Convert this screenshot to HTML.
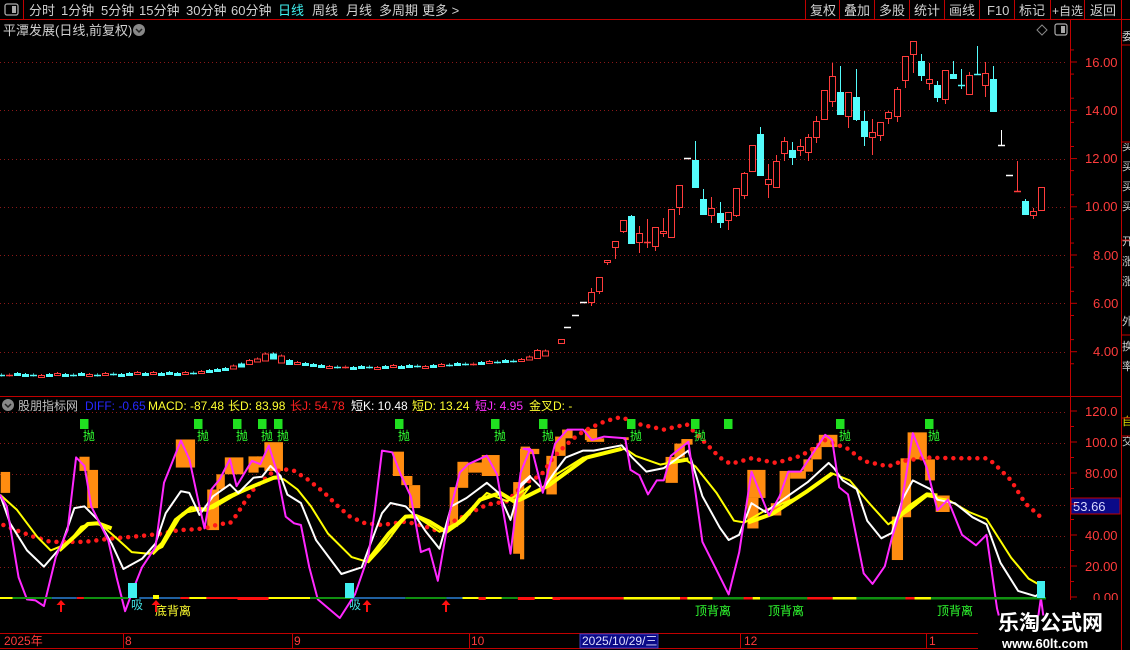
<!DOCTYPE html>
<html><head><meta charset="utf-8">
<style>
html,body{margin:0;padding:0;background:#000;width:1130px;height:650px;overflow:hidden}
svg{display:block}
text{font-family:"Liberation Sans","Noto Sans CJK SC",sans-serif}
</style></head><body>
<svg id="s" width="1130" height="650" xmlns="http://www.w3.org/2000/svg">
<rect width="1130" height="650" fill="#000"/>
<g stroke="#c00000" stroke-width="1" fill="none">
<line x1="0" y1="19.5" x2="1130" y2="19.5"/>
<line x1="23.5" y1="0" x2="23.5" y2="19"/>
<line x1="805.5" y1="0" x2="805.5" y2="19"/><line x1="839.5" y1="0" x2="839.5" y2="19"/>
<line x1="874.5" y1="0" x2="874.5" y2="19"/><line x1="909.5" y1="0" x2="909.5" y2="19"/>
<line x1="944.5" y1="0" x2="944.5" y2="19"/><line x1="979.5" y1="0" x2="979.5" y2="19"/>
<line x1="1014.5" y1="0" x2="1014.5" y2="19"/><line x1="1050.5" y1="0" x2="1050.5" y2="19"/>
<line x1="1084.5" y1="0" x2="1084.5" y2="19"/><line x1="1121.5" y1="0" x2="1121.5" y2="650"/>
<line x1="1070.5" y1="19" x2="1070.5" y2="633"/>
<line x1="0" y1="396.5" x2="1121" y2="396.5"/>
<line x1="0" y1="633.5" x2="978" y2="633.5"/>
<line x1="0" y1="648.5" x2="978" y2="648.5"/>
</g>
<rect x="5" y="4" width="13" height="11" rx="2" fill="none" stroke="#aaa" stroke-width="1.3"/>
<rect x="12" y="6" width="4" height="7" fill="#aaa"/>
<g font-size="13" fill="#d0d0d0">
<text x="29" y="15">分时</text><text x="61" y="15">1分钟</text><text x="101" y="15">5分钟</text>
<text x="139" y="15">15分钟</text><text x="186" y="15">30分钟</text><text x="231" y="15">60分钟</text>
<text x="278" y="15" fill="#40f0f0">日线</text><text x="312" y="15">周线</text><text x="346" y="15">月线</text>
<text x="379" y="15">多周期</text><text x="422" y="15">更多 &gt;</text>
<text x="810" y="15">复权</text><text x="844" y="15">叠加</text><text x="879" y="15">多股</text>
<text x="914" y="15">统计</text><text x="949" y="15">画线</text><text x="987" y="15">F10</text>
<text x="1019" y="15">标记</text><text x="1052" y="15" font-size="12">+自选</text><text x="1090" y="15">返回</text>
<text x="3" y="35">平潭发展(日线,前复权)</text>
</g>
<circle cx="139" cy="30" r="6" fill="#888"/><path d="M136 29 L139 32 L142 29" stroke="#222" stroke-width="1.5" fill="none"/>
<path d="M1042 25 L1047 30 L1042 35 L1037 30 Z" fill="none" stroke="#888"/>
<rect x="1055" y="24" width="12" height="11" rx="2" fill="none" stroke="#aaa" stroke-width="1.2"/><rect x="1061" y="26" width="4" height="7" fill="#aaa"/>
<g font-size="13" fill="#ff3c3c">
<text x="1085" y="67">16.00</text><text x="1085" y="115">14.00</text><text x="1085" y="163">12.00</text>
<text x="1085" y="211">10.00</text><text x="1093" y="260">8.00</text><text x="1093" y="308">6.00</text><text x="1093" y="356">4.00</text>
<text x="1085" y="416">120.0</text><text x="1085" y="447">100.0</text><text x="1085" y="478">80.00</text>
<text x="1085" y="540">40.00</text><text x="1085" y="571">20.00</text><text x="1093" y="602">0.00</text>
</g>
<rect x="1071" y="498" width="49" height="16" fill="#0a0a88" stroke="#c00000"/>
<text x="1073" y="511" font-size="13" fill="#d8d8ff">53.66</text>
<g fill="#ccc" font-size="11"><text x="1122" y="40">委</text><text x="1122" y="150">买</text><text x="1122" y="170">买</text><text x="1122" y="190">买</text><text x="1122" y="210">买</text><text x="1122" y="245">开</text><text x="1122" y="265">涨</text><text x="1122" y="285">涨</text><text x="1122" y="325">外</text><text x="1122" y="350">换</text><text x="1122" y="370">率</text>
<text x="1122" y="425" fill="#e0e000">自</text><text x="1122" y="445">交</text></g>
<g stroke="#c00000"><line x1="1121" y1="45" x2="1130" y2="45"/><line x1="1121" y1="142" x2="1130" y2="142"/><line x1="1121" y1="240" x2="1130" y2="240"/><line x1="1121" y1="335" x2="1130" y2="335"/><line x1="1121" y1="418" x2="1130" y2="418"/><line x1="1121" y1="436" x2="1130" y2="436"/></g>
<circle cx="8" cy="405" r="6" fill="#888"/><path d="M5 404 L8 407 L11 404" stroke="#222" stroke-width="1.5" fill="none"/>
<g font-size="12">
<text x="18" y="410" fill="#c0c0c0">股朋指标网</text>
<text x="85" y="410" fill="#2828ff">DIFF: -0.65</text>
<text x="148" y="410" fill="#ffff30">MACD: -87.48</text>
<text x="228" y="410" fill="#ffff30">长D: 83.98</text>
<text x="290" y="410" fill="#ff2020">长J: 54.78</text>
<text x="351" y="410" fill="#ffffff">短K: 10.48</text>
<text x="412" y="410" fill="#ffff30">短D: 13.24</text>
<text x="475" y="410" fill="#ff30ff">短J: 4.95</text>
<text x="529" y="410" fill="#ffff30">金叉D: -</text>
</g>
<g font-size="12" fill="#ff3c3c">
<text x="4" y="645">2025年</text><text x="125" y="645">8</text><text x="294" y="645">9</text><text x="471" y="645">10</text>
<text x="744" y="645">12</text><text x="929" y="645">1</text></g>
<rect x="580" y="634" width="78" height="14" fill="#0a0a88" stroke="#4040c0"/>
<text x="582" y="645" font-size="12" fill="#e0e0ff">2025/10/29/三</text>
<g stroke="#c00000"><line x1="123.5" y1="633" x2="123.5" y2="648"/><line x1="292.5" y1="633" x2="292.5" y2="648"/><line x1="469.5" y1="633" x2="469.5" y2="648"/><line x1="740.5" y1="633" x2="740.5" y2="648"/><line x1="926.5" y1="633" x2="926.5" y2="648"/></g>
<g font-size="12"><text x="155" y="615" fill="#ffff30">底背离</text>
<text x="695" y="615" fill="#30ff30">顶背离</text><text x="768" y="615" fill="#30ff30">顶背离</text><text x="937" y="615" fill="#30ff30">顶背离</text>
<text x="131" y="609" fill="#40e0e0">吸</text><text x="349" y="609" fill="#40e0e0">吸</text></g>
<rect x="980" y="600" width="141" height="50" fill="#000"/>
<text x="998" y="630" font-size="21" font-weight="bold" fill="#fff" font-family="'Liberation Serif','Noto Serif CJK SC',serif">乐淘公式网</text>
<text x="1002" y="648" font-size="13" font-weight="bold" fill="#fff" font-family="'Liberation Serif',serif">www.60lt.com</text>
<g id="g"></g>
</svg>
<script>
var NS="http://www.w3.org/2000/svg",G=document.getElementById('g');
function el(t,a){var e=document.createElementNS(NS,t);for(var k in a)e.setAttribute(k,a[k]);G.appendChild(e);return e;}
[62,110.3,158.6,206.8,255,303.3,351.7,411.7,442.7,473.7,504.7,535.7,566.7].forEach(function(y){
 el('line',{x1:0,y1:Math.round(y)+.5,x2:1068,y2:Math.round(y)+.5,stroke:'#8a1818','stroke-dasharray':'1 3'});});
for(var p=3.5;p<=16.5;p+=1){var y=62+(16-p)*24.14;if(y>25&&y<394)el('line',{x1:1071,y1:y,x2:1074,y2:y,stroke:'#c00000'});}
[62,110.3,158.6,206.8,255,303.3,351.7].forEach(function(y){el('line',{x1:1071,y1:y,x2:1077,y2:y,stroke:'#c00000'});});
for(var v=0;v<=120;v+=10){var y=597-v*1.55;el('line',{x1:1071,y1:y,x2:v%20?1074:1077,y2:y,stroke:'#c00000'});}
var RED='#ff3c3c',CY='#54fcfc';
var C=[];
var flat=[375,375,374,375,375,376,375,374,375,375,374,375,375,374,374,375,374,373,374,373,374,373,374,373,373,372,371,370,369,367,365,362,360,357,356,359,362,363,364,365,366,367,367,367,368,367,367,368,367,366,367,366,366,367,366,365,365,364,364,364,363,362,362,361,361,360,358,354,353];
for(var i=0;i<flat.length;i++){var x=1+i*8,y=flat[i],pr=i?flat[i-1]:y;var t=(i%3==0)?'c':(i%2?'r':'c');
 if(i>=32&&i<34)t='r';if(i==34)t='c';if(i>=66)t='r';
 var h=Math.max(1,Math.abs(y-pr)+((i>32&&i<36)||i>66?4:1));C.push([x,y-h/2,y+h/2,y-h/2-1,y+h/2+1,t]);}
C=C.concat([[561,339,343,339,343,'r'],[567,327,327,327,327,'w'],[575,315,315,315,315,'w'],[583,302,302,302,302,'w'],[591,292,302,288,306,'r'],[599,277,291,277,294,'r'],[607,260,262,260,265,'r'],[615,241,247,241,259,'r'],[623,220,231,220,233,'r'],[631,216,243,215,243,'c'],[639,233,242,226,253,'r'],[647,242,243,219,248,'r'],[655,227,246,227,251,'r'],[663,231,233,218,237,'r'],[671,209,237,209,237,'r'],[679,185,207,185,215,'r'],[687,158,158,158,158,'w'],[695,160,187,141,187,'c'],[703,199,214,189,214,'c'],[711,208,215,197,223,'r'],[720,213,222,202,228,'c'],[728,212,220,212,230,'r'],[736,188,215,188,217,'r'],[744,173,195,172,199,'r'],[752,145,171,145,171,'r'],[760,134,175,127,176,'c'],[768,179,184,164,198,'r'],[776,161,187,155,187,'r'],[784,141,153,137,161,'r'],[792,150,157,142,165,'c'],[800,146,150,139,156,'r'],[808,137,152,134,161,'r'],[816,121,137,116,143,'r'],[824,90,119,90,119,'r'],[832,76,101,63,107,'r'],[840,92,114,66,114,'c'],[848,92,116,92,128,'r'],[856,97,119,69,121,'c'],[864,121,136,111,146,'c'],[872,132,137,119,155,'r'],[880,122,135,122,141,'r'],[888,112,118,111,124,'r'],[897,89,116,87,122,'r'],[905,56,80,56,88,'r'],[913,41,54,41,73,'r'],[921,61,75,54,81,'c'],[929,79,83,63,90,'r'],[937,85,97,81,102,'c'],[945,70,99,70,104,'r'],[953,74,78,61,78,'c'],[961,85,86,69,89,'c'],[969,75,94,72,94,'r'],[977,74,75,46,75,'c'],[985,73,85,62,97,'r'],[993,79,111,66,111,'c'],[1001,145,145,130,145,'w'],[1009,175,175,175,175,'w'],[1017,191,191,161,191,'r'],[1025,201,214,199,215,'c'],[1033,211,215,208,219,'r'],[1041,187,210,187,210,'r']]);
C.forEach(function(c){var x=c[0],t=c[1],b=c[2],h=c[3],l=c[4],k=c[5];
 var col=k=='r'?RED:(k=='c'?CY:'#fff');
 if(h<t)el('line',{x1:x+.5,y1:h,x2:x+.5,y2:t,stroke:col});
 if(l>b)el('line',{x1:x+.5,y1:b,x2:x+.5,y2:l,stroke:col});
 if(b-t<2){el('line',{x1:x-3,y1:Math.round(t)+.5,x2:x+4,y2:Math.round(t)+.5,stroke:col,'stroke-width':1.5});}
 else if(k=='r')el('rect',{x:x-2.5,y:t+.5,width:6,height:b-t,fill:'#000',stroke:col});
 else el('rect',{x:x-3,y:t,width:7,height:b-t+1,fill:col});
});
function z9(a){var r=[];for(var i=0;i<a.length;i+=2)r.push([a[i]/2.958,405+a[i+1]/2.958]);return r;}
function z10(a){var r=[];for(var i=0;i<a.length;i+=2)r.push([520+a[i]/2.851,405+a[i+1]/2.851]);return r;}
function pl(pts,st,w,extra){var d=pts.map(function(p,i){return (i?'L':'M')+p[0].toFixed(1)+' '+p[1].toFixed(1);}).join('');var a={d:d,stroke:st,'stroke-width':w,fill:'none','stroke-linejoin':'round'};if(extra)for(var k in extra)a[k]=extra[k];el('path',a);}
var O9=[2,198,30,260,235,153,265,195,258,192,290,305,520,102,577,185,613,250,648,370,640,205,665,250,665,155,720,205,735,152,765,200,760,152,790,185,782,110,837,195,1162,138,1195,210,1187,210,1220,237,1210,237,1243,305,1330,243,1355,360,1353,168,1385,245,1385,170,1430,200,1425,148,1478,210,1518,228,1550,440,1540,123,1568,230];
for(var i=0;i<O9.length;i+=4)el('rect',{x:O9[i]/2.958,y:405+O9[i+1]/2.958,width:(O9[i+2]-O9[i])/2.958,height:(O9[i+3]-O9[i+1])/2.958,fill:'#ff8c10'});
var O10=[0,125,12,440,5,125,55,140,75,145,105,255,100,90,130,145,120,70,150,95,185,68,220,100,190,95,240,105,295,92,310,100,415,148,450,222,440,110,470,150,460,97,492,113,648,185,700,265,648,265,680,352,715,280,745,315,740,188,770,280,770,188,815,210,808,155,835,190,830,120,860,155,852,85,905,120,1060,318,1092,442,1085,152,1115,320,1105,78,1160,155,1155,155,1183,215,1185,258,1225,305];
for(var i=0;i<O10.length;i+=4)el('rect',{x:520+O10[i]/2.851,y:405+O10[i+1]/2.851,width:(O10[i+2]-O10[i])/2.851,height:(O10[i+3]-O10[i+1])/2.851,fill:'#ff8c10'});
var RD=z9([10,355,60,375,100,390,150,405,200,405,250,405,290,400,330,395,390,390,440,385,480,380,530,370,570,368,605,365,650,352,680,350,700,325,725,285,750,250,770,230,805,200,840,190,870,195,910,220,935,240,960,260,1000,300,1035,330,1080,350,1130,355,1200,345,1260,360,1300,375,1340,345,1380,325,1440,295,1500,285,1540,245]).concat(z10([0,230,60,200,95,150,130,115,165,85,200,65,235,50,270,38,290,35,340,55,410,70,475,55,510,90,545,125,570,150,600,168,660,152,730,165,800,145,835,125,870,100,935,125,980,160,1050,175,1090,160,1160,150,1250,152,1330,152,1350,165,1370,185,1400,215,1440,280,1485,320]));
pl(RD,'#ff1a1a',4.5,{'stroke-dasharray':'0 8','stroke-linecap':'round'});
pl(z9([175,430,230,380,260,352,290,350,330,365]),'#ffff00',4);
pl(z9([450,440,480,410,520,340,565,305,610,310,680,270,750,240,810,215,830,213]),'#ffff00',4);
pl(z9([1085,465,1150,380,1200,330,1230,328,1270,345,1320,375,1370,340,1420,280,1480,260,1520,285]).concat(z10([0,270,80,230,190,150,290,125])),'#ffff00',4);
pl(z10([420,165,480,155]),'#ffff00',4);
pl(z10([650,335,720,310,820,245,890,195]),'#ffff00',4);
pl(z10([1060,340,1110,290,1160,255,1190,258]),'#ffff00',4);
pl(z9([0,265,50,310,110,390,150,430,200,410,240,360,270,350,300,355,340,390,390,435,440,440,480,420,540,320,590,310,630,305,690,270,750,240,810,215,840,220,880,250,920,300,970,380,1040,450,1090,465,1140,410,1200,330,1240,335,1300,375,1350,350,1440,260,1500,285,1568,240]).concat(z10([0,270,60,240,100,200,180,150,300,125,330,145,400,170,470,155,500,175,560,250,610,330,640,335,700,300,800,260,890,195,940,215,1000,285,1050,340,1110,300,1160,260,1220,270,1280,305,1330,325,1400,435,1450,495,1485,515])),'#ffff00',2);
pl(z9([0,265,30,350,80,430,130,478,180,420,220,305,250,300,290,340,330,410,365,485,420,455,460,410,490,320,535,255,560,260,590,325,630,270,680,235,705,260,750,215,775,212,800,180,830,210,850,265,890,290,935,400,1010,500,1070,480,1130,320,1155,290,1200,300,1230,330,1260,375,1300,425,1335,300,1380,275,1440,230,1475,260,1510,340,1540,235,1568,210]).concat(z10([0,235,30,205,65,240,100,190,130,150,180,130,210,130,290,115,320,150,360,190,410,180,480,130,520,260,570,350,595,385,625,370,660,280,700,305,770,255,820,220,880,165,895,180,920,215,960,240,990,330,1030,380,1060,365,1090,270,1120,215,1170,240,1190,270,1240,280,1290,320,1330,340,1370,450,1420,530,1470,545,1490,530])),'#ffffff',2);
pl(z9([0,265,20,300,55,510,80,575,105,578,130,595,165,450,200,370,225,155,250,180,270,300,320,400,345,510,370,610,400,530,420,480,460,420,485,230,535,105,560,160,590,300,605,365,625,250,650,220,680,160,700,240,745,165,770,175,795,120,820,200,845,330,870,350,890,355,915,480,940,575,1005,630,1050,560,1090,445,1110,300,1130,135,1160,140,1185,205,1215,270,1245,435,1270,425,1295,520,1330,320,1360,200,1385,175,1440,150,1470,205,1510,440,1540,200,1568,130]).concat(z10([10,125,35,130,65,250,100,110,135,70,180,70,205,100,240,90,300,95,315,185,340,200,365,255,390,215,410,215,430,145,480,105,520,390,555,460,595,540,625,420,660,190,710,315,740,260,765,190,800,190,830,145,870,85,890,100,910,235,935,255,980,480,1005,510,1040,460,1060,380,1085,300,1120,80,1160,180,1190,300,1220,270,1260,370,1300,400,1330,370,1360,580,1365,600])),'#ff28ff',2);
pl(z10([1478,600,1485,550,1492,600]),'#ff28ff',2);
var BL={g:'#109010',b:'#2060a0',y:'#ffff00',r:'#ff1010',c:'#40e0e0'};
var S4=[[0,35,'y'],[35,145,'g'],[145,215,'b'],[215,235,'r'],[235,360,'g'],[390,505,'b'],[505,530,'r'],[530,578,'y'],[578,665,'r'],[665,752,'r'],[752,868,'y'],[868,985,'g'],[985,1135,'b'],[1135,1250,'g'],[1250,1295,'b'],[1295,1340,'y'],[1340,1360,'r'],[1360,1405,'y'],[1405,1450,'g'],[1450,1497,'r'],[1497,1547,'y'],[1547,1568,'r']];
S4.forEach(function(s){el('rect',{x:s[0]/2.8,y:597,width:(s[1]-s[0])/2.8,height:s[2]=='r'&&s[0]>600?3:2,fill:BL[s[2]]});});
var S5=[[0,175,'r'],[175,330,'y'],[330,350,'r'],[350,420,'y'],[420,1568,'g'],[505,530,'r'],[530,550,'y'],[680,750,'r'],[750,815,'y'],[950,975,'r'],[975,1020,'y']];
S5.forEach(function(s){var x0=560+s[0]/2.75,x1=Math.min(560+s[1]/2.75,1046);el('rect',{x:x0,y:597,width:x1-x0,height:2.5,fill:BL[s[2]]});});
el('rect',{x:153,y:595,width:6,height:4,fill:'#ffff00'});
el('rect',{x:128,y:583,width:9,height:15,fill:'#40f0f0'});
el('rect',{x:345,y:583,width:9,height:15,fill:'#40f0f0'});
el('rect',{x:1037,y:581,width:8,height:17,fill:'#40f0f0'});
[61,156,367,446].forEach(function(x){el('path',{d:'M'+x+' 600 L'+(x-4.5)+' 605 L'+(x+4.5)+' 605 Z',fill:'#ff1010'});el('rect',{x:x-1,y:604,width:2,height:8,fill:'#ff1010'});});
var GS=[[80,true],[194,true],[233,true],[258,true],[274,true],[395,true],[491,true],[539,true],[627,true],[691,true],[724,false],[836,true],[925,true]];
GS.forEach(function(g){el('rect',{x:g[0],y:419,width:8.5,height:10,fill:'#20e020'});
 if(g[1]){var t=el('text',{x:g[0]+3,y:440,'font-size':12,fill:'#30ff30'});t.textContent='抛';}});
</script>
</body></html>
